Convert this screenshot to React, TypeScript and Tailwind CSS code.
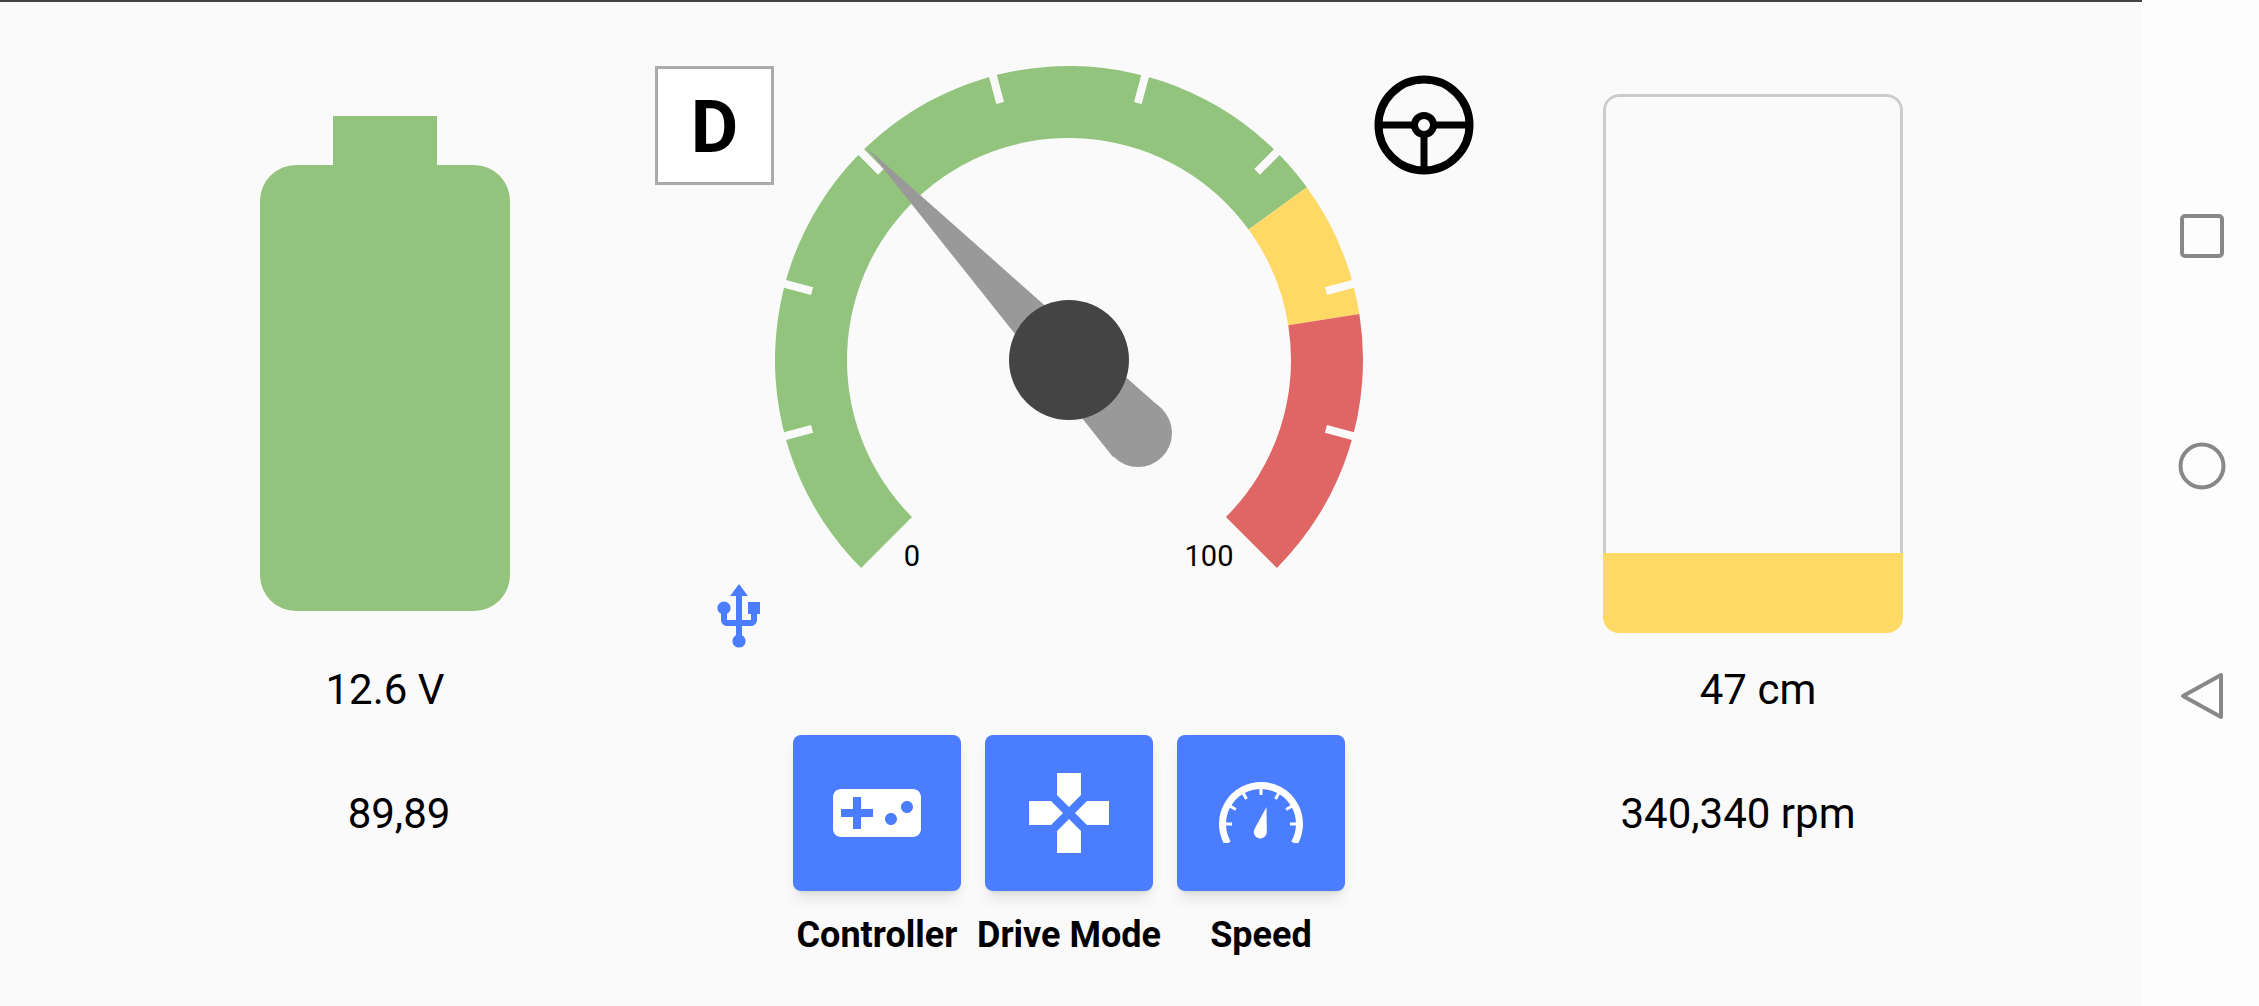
import { MdGamepad, MdUsb, MdVideogameAsset } from 'react-icons/md';

const CX = 294;
const CY = 294;
const R_OUT = 294;
const R_IN = 222;

function polar(r: number, deg: number, cx = CX, cy = CY) {
  const a = (deg * Math.PI) / 180;
  return [cx + r * Math.cos(a), cy + r * Math.sin(a)];
}

function bandPath(from: number, to: number) {
  const [ax, ay] = polar(R_OUT, from);
  const [bx, by] = polar(R_OUT, to);
  const [cx, cy] = polar(R_IN, to);
  const [dx, dy] = polar(R_IN, from);
  const large = to - from > 180 ? 1 : 0;
  return `M${ax} ${ay}A${R_OUT} ${R_OUT} 0 ${large} 1 ${bx} ${by}L${cx} ${cy}A${R_IN} ${R_IN} 0 ${large} 0 ${dx} ${dy}Z`;
}

const bands = [
  { from: 135, to: 324, color: '#93c47d' },
  { from: 324, to: 351, color: '#ffd966' },
  { from: 351, to: 405, color: '#e06666' },
];

const ticks = [165, 195, 225, 255, 285, 315, 345, 375];

function Gauge() {
  return (
    <svg width="588" height="516" viewBox="0 0 588 516" className="shrink-0">
      {bands.map((b) => (
        <path key={b.from} d={bandPath(b.from, b.to)} fill={b.color} />
      ))}
      {ticks.map((t) => {
        const [x1, y1] = polar(266, t);
        const [x2, y2] = polar(296, t);
        return <line key={t} x1={x1} y1={y1} x2={x2} y2={y2} stroke="#fafafa" strokeWidth="8" />;
      })}
      <polygon points="92,82 388,344 338,391" fill="#999999" />
      <circle cx="363" cy="367" r="34" fill="#999999" />
      <circle cx={CX} cy={CY} r="60" fill="#444444" />
      <text x="137" y="490" textAnchor="middle" dominantBaseline="central" fontSize="29" fill="#000" className="font-[Roboto]">
        0
      </text>
      <text x="434" y="490" textAnchor="middle" dominantBaseline="central" fontSize="29" fill="#000" className="font-[Roboto]">
        100
      </text>
    </svg>
  );
}

function SteeringWheel() {
  return (
    <svg width="100" height="100" viewBox="0 0 100 100" className="mt-[9px] ml-[11px] shrink-0">
      <circle cx="50" cy="50" r="45.5" fill="none" stroke="#000" strokeWidth="8" />
      <circle cx="50" cy="50" r="9.5" fill="none" stroke="#000" strokeWidth="7" />
      <path d="M6 50H41M59 50H94M50 59V94" fill="none" stroke="#000" strokeWidth="7" />
    </svg>
  );
}

function SpeedIcon() {
  const c = 48;
  const cy = 59;
  const small = [180, 210, 240, 270, 300, 330, 360];
  const [sx, sy] = polar(38.5, 150, c, cy);
  const [ex, ey] = polar(38.5, 30, c, cy);
  return (
    <svg width="96" height="96" viewBox="0 0 96 96">
      <defs>
        <clipPath id="speed-clip">
          <rect x="0" y="0" width="96" height="78" />
        </clipPath>
      </defs>
      <path
        d={`M${sx} ${sy}A38.5 38.5 0 1 1 ${ex} ${ey}`}
        fill="none"
        stroke="#fff"
        strokeWidth="7"
        clipPath="url(#speed-clip)"
      />
      {small.map((d) => {
        const [x1, y1] = polar(29, d, c, cy);
        const [x2, y2] = polar(38, d, c, cy);
        return <line key={d} x1={x1} y1={y1} x2={x2} y2={y2} stroke="#fff" strokeWidth="3" />;
      })}
      <path d="M53.5 42L53.8 67A6.5 6.5 0 1 1 41.5 64Z" fill="#fff" />
    </svg>
  );
}

const buttons = [
  { label: 'Controller', icon: <MdVideogameAsset size={96} color="#fff" /> },
  { label: 'Drive Mode', icon: <MdGamepad size={96} color="#fff" /> },
  { label: 'Speed', icon: <SpeedIcon /> },
];

function NavBar() {
  return (
    <div className="flex w-[117px] shrink-0 flex-col items-center gap-[182px] bg-[#fdfdfd] pt-[212px] pl-[3px]">
      <svg width="48" height="48" viewBox="0 0 48 48">
        <rect x="4" y="4" width="40" height="40" rx="3" fill="none" stroke="#888888" strokeWidth="4" />
      </svg>
      <svg width="48" height="48" viewBox="0 0 48 48">
        <circle cx="24" cy="24" r="21.5" fill="none" stroke="#888888" strokeWidth="4" />
      </svg>
      <svg width="48" height="48" viewBox="0 0 48 48">
        <path d="M5 24L43 3V45Z" fill="none" stroke="#888888" strokeWidth="4" strokeLinejoin="round" />
      </svg>
    </div>
  );
}

export default function App() {
  return (
    <div className="flex h-[1006px] w-[2259px] overflow-hidden bg-[#fafafa] font-[Roboto,sans-serif] text-black">
      <div className="flex w-[2142px] shrink-0 border-t-2 border-[#444444]">
        {/* Battery */}
        <div className="w-[655px] shrink-0 pt-[114px] pl-[260px]">
          <div className="ml-[73px] h-[49px] w-[104px] bg-[#93c47d]" />
          <div className="h-[446px] w-[250px] rounded-[36px] bg-[#93c47d]" />
          <div className="mt-[55px] w-[250px] text-center text-[42px] leading-[48px]">12.6 V</div>
          <div className="mt-[76px] ml-[14px] w-[250px] text-center text-[42px] leading-[48px]">89,89</div>
        </div>

        {/* Gauge and buttons */}
        <div className="w-[817px] shrink-0 pt-[64px]">
          <div className="flex items-start">
            <div className="w-[120px] shrink-0">
              <div className="flex h-[119px] w-[119px] items-center justify-center border-[3px] border-[#aaaaaa] bg-white pt-[3px] text-[73px] leading-none font-bold">
                D
              </div>
              <MdUsb size={72} color="#4a7dff" className="mt-[396px] ml-[48px]" />
            </div>
            <Gauge />
            <SteeringWheel />
          </div>
          <div className="mt-[82px] ml-[138px] flex gap-[24px]">
            {buttons.map((b) => (
              <div key={b.label} className="flex w-[168px] flex-col items-center">
                <div className="flex h-[156px] w-[168px] items-center justify-center rounded-[8px] bg-[#4a7dff] shadow-lg">
                  {b.icon}
                </div>
                <div className="mt-[22px] text-[36px] leading-[44px] font-bold whitespace-nowrap">{b.label}</div>
              </div>
            ))}
          </div>
        </div>

        {/* Distance tank */}
        <div className="flex-1 pt-[92px] pl-[131px]">
          <div className="flex h-[539px] w-[300px] flex-col overflow-hidden rounded-[16px]">
            <div className="flex-1 rounded-t-[16px] border-[3px] border-b-0 border-[#cccccc]" />
            <div className="h-[80px] bg-[#ffd966]" />
          </div>
          <div className="mt-[33px] ml-[5px] w-[300px] text-center text-[42px] leading-[48px]">47 cm</div>
          <div className="mt-[76px] -ml-[15px] w-[300px] text-center text-[42px] leading-[48px]">340,340 rpm</div>
        </div>
      </div>
      <NavBar />
    </div>
  );
}
